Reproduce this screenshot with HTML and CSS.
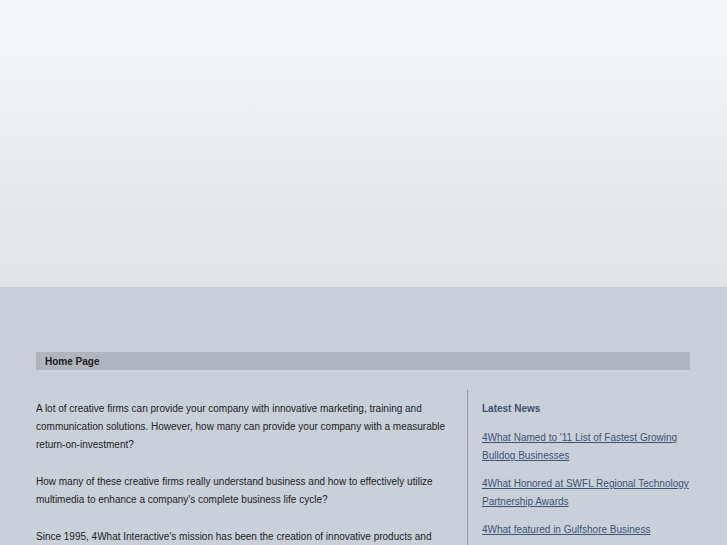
FILE: index.html
```html
<!DOCTYPE html>
<html>
<head>
<meta charset="utf-8">
<link rel="stylesheet" href="styles.css">
</head>
<body>
<div class="top"></div>
<div class="main">
  <div class="wrap">
    <div class="titlebar">Home Page</div>
    <div class="cols">
      <div class="content">
        <p>A lot of creative firms can provide your company with innovative marketing, training and communication solutions. However, how many can provide your company with a measurable return-on-investment?</p>
        <p>How many of these creative firms really understand business and how to effectively utilize multimedia to enhance a company's complete business life cycle?</p>
        <p>Since 1995, 4What Interactive's mission has been the creation of innovative products and services that deliver measurable results for our clients and their customers.</p>
      </div>
      <div class="side">
        <h3>Latest News</h3>
        <p><a href="#">4What Named to '11 List of Fastest Growing Bulldog Businesses</a></p>
        <p><a href="#">4What Honored at SWFL Regional Technology Partnership Awards</a></p>
        <p><a href="#">4What featured in Gulfshore Business</a></p>
      </div>
    </div>
  </div>
</div>
</body>
</html>
```
FILE: styles.css
```css
html, body { margin: 0; padding: 0; }
body {
  font-family: "Liberation Sans", Arial, sans-serif;
  font-size: 10px;
  color: #222;
  background: #c9d0d9;
}
.top {
  height: 287px;
  background: linear-gradient(#f3f4f6 0px, #f2f3f5 50px, #e9eaec 180px, #e2e3e5 287px);
}
.main {
  background: #c9d0d9;
  padding-top: 65px;
  min-height: 400px;
}
.wrap {
  margin-left: 36px;
  width: 654px;
}
.titlebar {
  background: #b0b5bd;
  height: 17px;
  padding-top: 1px;
  line-height: 18px;
  font-weight: bold;
  color: #1a1a1a;
  padding-left: 9px;
}
.cols {
  display: flex;
  margin-top: 20px;
}
.content {
  width: 416px;
  padding-top: 10px;
  padding-right: 15px;
}
.content p {
  margin: 0 0 19px 0;
  line-height: 18px;
}
.side {
  border-left: 1px solid #8e96a2;
  padding-left: 14px;
  padding-top: 10px;
  flex: 1;
}
.side h3 {
  margin: 0 0 11px 0;
  font-size: 10px;
  line-height: 18px;
  color: #3c5270;
}
.side p {
  margin: 0 0 10px 0;
  line-height: 18px;
}
.side a {
  color: #3b5377;
  text-decoration: underline;
}
```
